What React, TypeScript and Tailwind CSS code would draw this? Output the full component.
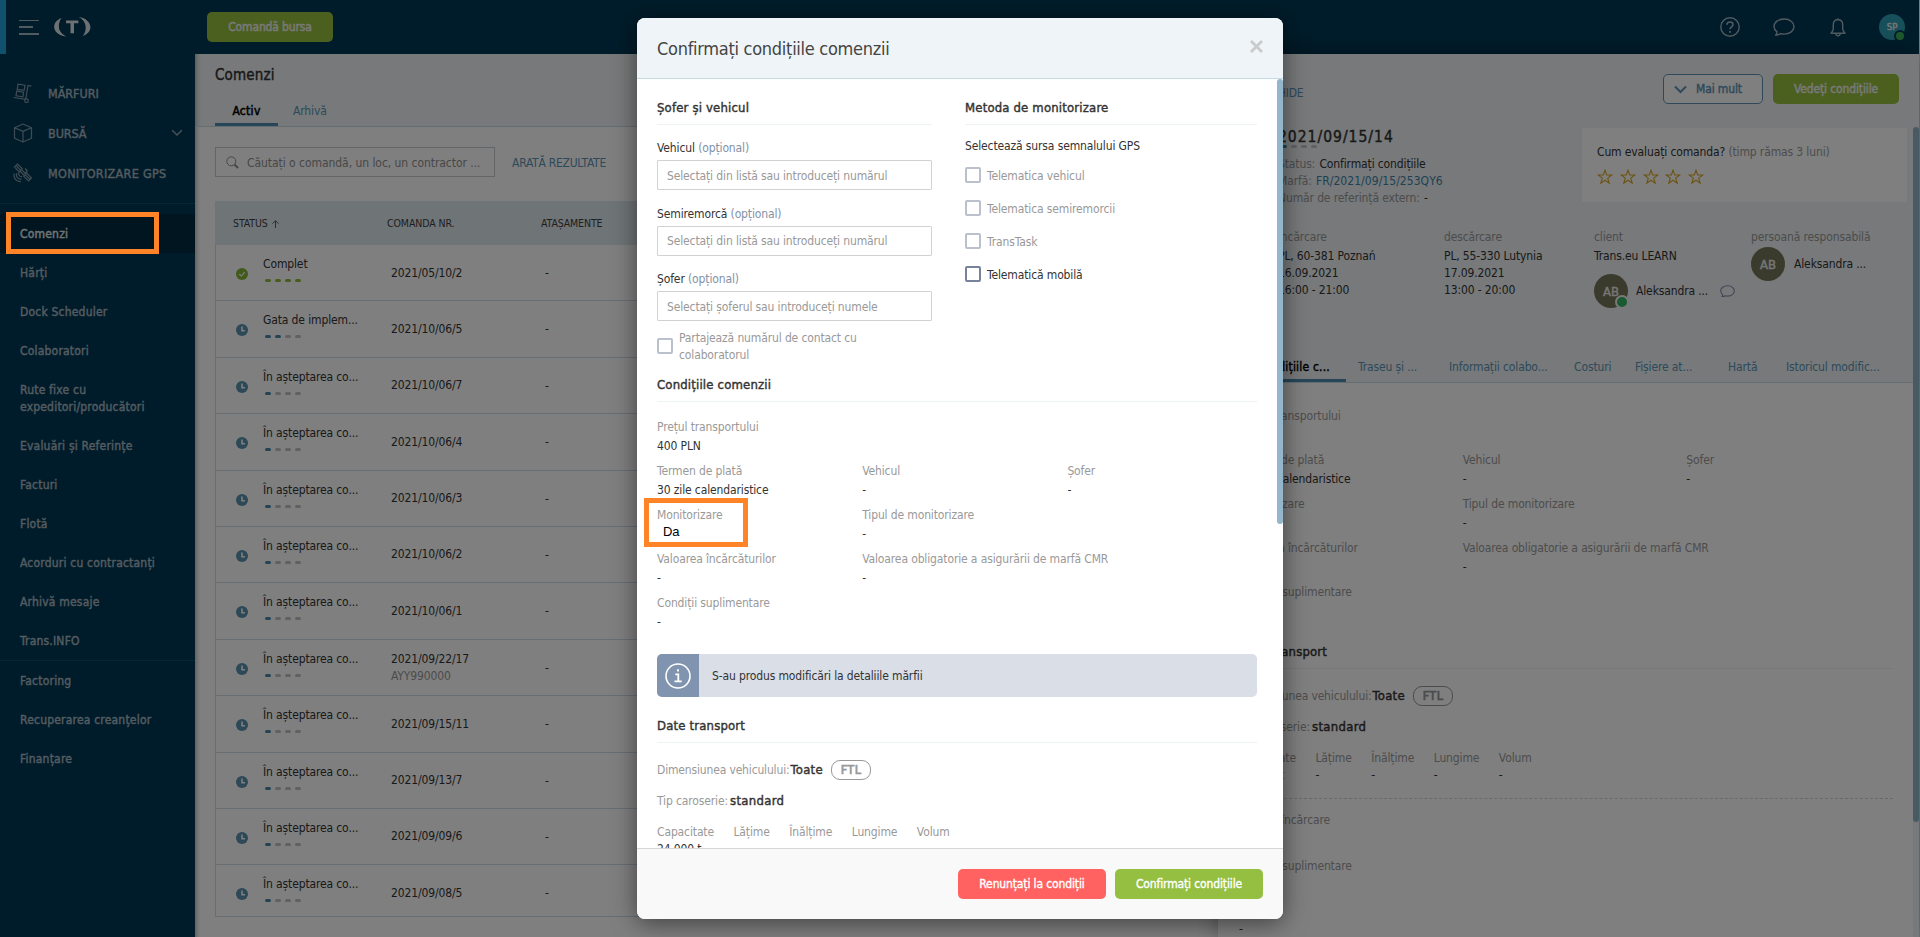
import type { ReactNode } from "react";

const orders = [
  { status: 'Complet', number: '2021/05/10/2', done: 4 },
  { status: 'Gata de implem...', number: '2021/10/06/5', done: 2 },
  { status: 'În așteptarea co...', number: '2021/10/06/7', done: 1 },
  { status: 'În așteptarea co...', number: '2021/10/06/4', done: 1 },
  { status: 'În așteptarea co...', number: '2021/10/06/3', done: 1 },
  { status: 'În așteptarea co...', number: '2021/10/06/2', done: 1 },
  { status: 'În așteptarea co...', number: '2021/10/06/1', done: 1 },
  { status: 'În așteptarea co...', number: '2021/09/22/17', extra: 'AYY990000', done: 1 },
  { status: 'În așteptarea co...', number: '2021/09/15/11', done: 1 },
  { status: 'În așteptarea co...', number: '2021/09/13/7', done: 1 },
  { status: 'În așteptarea co...', number: '2021/09/09/6', done: 1 },
  { status: 'În așteptarea co...', number: '2021/09/08/5', done: 1 },
];

const menuItems = [
  'Hărți',
  'Dock Scheduler',
  'Colaboratori',
  'Rute fixe cu expeditori/producători',
  'Evaluări și Referințe',
  'Facturi',
  'Flotă',
  'Acorduri cu contractanți',
  'Arhivă mesaje',
  'Trans.INFO',
];

const financeItems = ['Factoring', 'Recuperarea creanțelor', 'Finanțare'];

const detailTabs = [
  { label: 'Traseu și ...', width: 'w-[91px]' },
  { label: 'Informații colabo...', width: 'w-[125px]' },
  { label: 'Costuri', width: 'w-[61px]' },
  { label: 'Fișiere at...', width: 'w-[93px]' },
  { label: 'Hartă', width: 'w-[58px]' },
  { label: 'Istoricul modific...', width: 'w-[100px]' },
];

const semi = '[-webkit-text-stroke:0.4px_currentColor]';

function Progress({ done }: { done: number }) {
  return (
    <div className="flex gap-1">
      {[0, 1, 2, 3].map((step) => (
        <span
          key={step}
          className={`h-[3px] w-1.5 rounded-full ${done === 4 ? 'bg-[#8fbb3c]' : step < done ? 'bg-[#4889ab]' : 'bg-[#c3c3c3]'}`}
        />
      ))}
    </div>
  );
}

function StatusIcon({ complete }: { complete: boolean }) {
  return (
    <svg width="12" height="12" viewBox="0 0 12 12" fill="none" stroke="#fff">
      <circle cx="6" cy="6" r="6" fill={complete ? '#87b53a' : '#5b90ac'} stroke="none" />
      {complete ? <path d="M3.2 6.1 5.3 8l3.5-3.8" strokeWidth="1.1" /> : <path d="M6 2.6V6.7H9" strokeWidth="1.6" />}
    </svg>
  );
}

function Bubble({ width, height, color, stroke }: { width: number; height: number; color: string; stroke: number }) {
  return (
    <svg width={width} height={height} viewBox="0 0 22 18" fill="none" stroke={color} strokeWidth={stroke} strokeLinejoin="round">
      <path d="M11.2 1C5.4 1 1 4.3 1 8.5c0 2.2 1.2 4 3 5.4-.1 1.2-.5 2.3-1.3 3.3 2.1-.1 3.7-.7 4.8-1.6 1.1.3 2.4.5 3.7.5 5.7 0 9.8-3.3 9.8-7.5S16.9 1 11.2 1Z" />
    </svg>
  );
}

function Avatar({ online }: { online?: boolean }) {
  return (
    <div className={`relative flex h-[34px] w-[34px] shrink-0 items-center justify-center rounded-full bg-[#75755a] text-[13px] text-[#ededed] ${semi}`}>
      AB
      {online && <span className="absolute -right-px -bottom-px h-3.5 w-3.5 rounded-full border-2 border-[#eef3f5] bg-[#35b45e]" />}
    </div>
  );
}

function SectionTitle({ children }: { children: ReactNode }) {
  return <h3 className={`h-7 border-b border-[#edf3f5] text-[13px] leading-[21px] tracking-[0.17px] text-[#333] ${semi}`}>{children}</h3>;
}

function Field({ label, value = '-' }: { label: string; value?: string }) {
  return (
    <div className="h-[38px] pt-px leading-[19px] whitespace-nowrap">
      <div className="text-[#999]">{label}</div>
      <div className="text-[#333]">{value}</div>
    </div>
  );
}

// Order conditions are listed both in the side panel and in the dialog
function Conditions({ highlighted }: { highlighted?: boolean }) {
  return (
    <div className="grid grid-cols-[repeat(2,34.2%)_31.6%] gap-y-1.5">
      <div className="col-span-3"><Field label="Prețul transportului" value="400 PLN" /></div>
      <Field label="Termen de plată" value="30 zile calendaristice" />
      <Field label="Vehicul" />
      <Field label="Șofer" />
      <div className="relative">
        <Field label="Monitorizare" value={highlighted ? '' : 'Da'} />
        {highlighted && (
          <div className="absolute -top-[7px] -left-[13px] h-[49px] w-[104px] border-5 border-[#ff8427]">
            <span className="absolute top-[19px] left-[14px] font-['Liberation_Sans',sans-serif] text-[13px] text-black">Da</span>
          </div>
        )}
      </div>
      <div className="col-span-2"><Field label="Tipul de monitorizare" /></div>
      <Field label="Valoarea încărcăturilor" />
      <div className="col-span-2"><Field label="Valoarea obligatorie a asigurării de marfă CMR" /></div>
      <div className="col-span-3"><Field label="Condiții suplimentare" /></div>
    </div>
  );
}

function TransportData({ values }: { values: string[] }) {
  return (
    <>
      <SectionTitle>Date transport</SectionTitle>
      <div className="mt-[17px] flex h-5 items-center tracking-[-0.16px] text-[#999]">
        Dimensiunea vehiculului:
        <span className={`ml-px text-[13px] tracking-[0.3px] text-[#333] ${semi}`}>Toate</span>
        <span className={`ml-2 flex h-5 w-10 items-center justify-center rounded-[9px] border border-[#999] text-[12.5px] tracking-[0.4px] [-webkit-text-stroke:0.7px_#999]`}>FTL</span>
      </div>
      <div className="mt-[11px] flex h-5 items-center text-[#999]">
        Tip caroserie:
        <span className={`ml-0.5 text-[13px] tracking-[0.3px] text-[#333] ${semi}`}>standard</span>
      </div>
      <div className="mt-[11px] flex gap-[19.5px] pt-px whitespace-nowrap text-[#999]">
        {['Capacitate', 'Lățime', 'Înălțime', 'Lungime', 'Volum'].map((label, index) => (
          <div key={label}>
            <div className="leading-[19px]">{label}</div>
            <div className="h-4 leading-[15px] text-[#333]">{values[index]}</div>
          </div>
        ))}
      </div>
    </>
  );
}

function Header() {
  return (
    <header className="flex h-[54px] shrink-0 items-center bg-[#003955]">
      <div className="h-full w-1.5 bg-[#20a4dc]" />
      <div className="ml-[13px] flex h-[15px] flex-col justify-between">
        <span className="h-[1.5px] w-5 bg-[#a3b4bf]" />
        <span className="h-[1.5px] w-3.5 bg-[#a3b4bf]" />
        <span className="h-[1.5px] w-5 bg-[#a3b4bf]" />
      </div>
      <svg className="ml-[15px]" width="38" height="22" viewBox="0 0 38 22" fill="#dde3e6">
        <path d="M7.5 2C2.5 4 .1 7.3.2 11c.2 4.5 4 8.3 12 9.5C7.7 18.2 5 14.8 4.9 11 4.7 7.4 5.6 4.7 7.5 2Z" />
        <path d="M28.8 20C33.8 18 36.5 15 36.4 11 36.2 6.5 32 1.9 24.5 1c4.5 2 7 6 7.2 10 .2 3.5-1 6.5-2.9 9Z" />
        <path d="M12 4.600h12.400V7.200H20V17.300h-3.500V7.200H12Z" />
      </svg>
      <button className={`ml-[115px] h-[30px] w-[126px] rounded-[5px] bg-[#96c03f] text-[12px] text-[#f2f2f2] ${semi}`}>Comandă bursa</button>
      <div className="mr-3.5 ml-auto flex items-center">
        <svg width="20" height="20" viewBox="0 0 20 20" fill="none" stroke="#a3b4bf" strokeWidth="1.4">
          <circle cx="10" cy="10" r="9.2" />
          <path d="M7 7.8C7 5.9 8.3 5 10 5s3 1 3 2.6c0 2.1-3 2.3-3 4.6" strokeWidth="1.6" />
          <path d="M10 14v1.8" strokeWidth="1.8" />
        </svg>
        <div className="ml-[33px]"><Bubble width={22} height={18} color="#a3b4bf" stroke={1.4} /></div>
        <svg className="ml-[35px]" width="16" height="19" viewBox="0 0 16 19" fill="none" stroke="#a3b4bf" strokeWidth="1.4" strokeLinejoin="round">
          <path d="M8 1.7c-3 0-4.7 2.1-4.7 5v4.2c0 1.6-.9 2.6-2.3 4.3h14c-1.4-1.700-2.300-2.700-2.300-4.300V6.700c0-2.900-1.700-5-4.700-5Z" />
          <path d="M8 .2v1.5M5.800 15.500c.2 3 4.200 3 4.400 0" />
        </svg>
        <div className={`relative ml-[33px] flex h-[26px] w-[26px] items-center justify-center rounded-full bg-[#2f9fb4] text-[9.5px] text-[#eee] ${semi}`}>
          SP
          <span className="absolute -right-px -bottom-0.5 h-3 w-3 rounded-full border-2 border-[#003955] bg-[#3cb45c]" />
        </div>
      </div>
    </header>
  );
}

function Sidebar() {
  return (
    <nav className="w-[195px] shrink-0 bg-[#003955] text-[#aab7c0]">
      <div className={`pt-[19px] text-[12.5px] leading-[17px] tracking-[-0.05px] ${semi}`}>
        <div className="flex h-10 items-center pl-[13px]">
          <svg className="w-5" height="20" viewBox="0 0 20 20" fill="none" stroke="#7f98a6" strokeWidth="1.2">
            <path d="M5 1.2l7 1-.9 5.2-6.9-1ZM3.7 8.2l6.9 1-.7 4.6-6.9-1ZM.5 14.5l12.2 1.8L15 2.5l3.5.7" />
            <circle cx="13.5" cy="17.7" r="1.8" />
          </svg>
          <span className="ml-[15px] pt-px">MĂRFURI</span>
        </div>
        <div className="flex h-10 items-center pr-3 pl-[13px]">
          <svg width="20" height="20" viewBox="0 0 20 20" fill="none" stroke="#7f98a6" strokeWidth="1.2" strokeLinejoin="round">
            <path d="M10 1l8.500 3.700v10.500L10 19l-8.500-3.800V4.700ZM1.500 4.700 10 8.400l8.500-3.700M10 8.400V19" />
          </svg>
          <span className="ml-[15px] pt-px">BURSĂ</span>
          <svg className="ml-auto" width="12" height="8" viewBox="0 0 12 8" fill="none" stroke="#8ea3b0" strokeWidth="1.5"><path d="M1.2 1.2 6 6l4.8-4.8" /></svg>
        </div>
        <div className="flex h-10 items-center pl-[13px]">
          <svg width="20" height="20" viewBox="0 0 20 20" fill="none" stroke="#7f98a6" strokeWidth="1.2">
            <path d="M4.500 1 1.500 4l4.800 4.800 3-3ZM13.700 10.200l-3 3 4.800 4.800 3-3ZM3 2.500l4.800 4.800M12.200 11.700l4.800 4.800M8.500 6.600l4.400 4.400M7 8.200l4.300 4.300M12 5.500l2.300 2.300-2.500 2.500M6.300 9.400c-1.500 1.700-.4 4.300 2.800 4.300M3.800 10.200c-1.400 3.200 1 6.300 4.700 5.900M1.200 10.500C.2 15.200 3.200 19 8 18.600" />
          </svg>
          <span className="ml-[15px] pt-px tracking-[0.3px]">MONITORIZARE GPS</span>
        </div>
      </div>
      <div className={`mt-[10px] border-t border-[#0a4d6e] pt-[10px] leading-[17px] tracking-[0.2px] ${semi}`}>
        <div className="bg-[#002a40] px-5 pt-3 pb-2.5 text-[#e4e7e9]">Comenzi</div>
        {menuItems.map((item) => (
          <div key={item} className="px-5 pt-3 pb-2.5">{item}</div>
        ))}
      </div>
      <div className={`border-t border-[#0a4d6e] leading-[17px] tracking-[0.2px] ${semi}`}>
        {financeItems.map((item) => (
          <div key={item} className="px-5 pt-3 pb-2.5">{item}</div>
        ))}
      </div>
    </nav>
  );
}

function OrderList() {
  return (
    <main className="w-[1023px] shrink-0 bg-white shadow-[inset_6px_0_5px_-5px_rgba(0,0,0,0.35)]">
      <div className="h-[73px] border-b border-[#c9dce5] bg-[#eef3f5] pl-5 shadow-[inset_6px_0_5px_-5px_rgba(0,0,0,0.35)]">
        <h1 className={`pt-[10px] text-[15px] leading-[22px] tracking-[0.15px] text-[#333] ${semi}`}>Comenzi</h1>
        <div className="mt-2 flex h-8 pt-px leading-[32px]">
          <div className="h-[31px] w-[63px] border-b-3 border-[#4f8db0] text-center tracking-[0.3px] text-black [-webkit-text-stroke:0.5px_black]">Activ</div>
          <div className="ml-[15px] text-[#5b93b6]">Arhivă</div>
        </div>
      </div>
      <div className="mt-5 ml-5 flex items-center">
        <div className="flex h-[30px] w-[280px] items-center border border-[#c6cdd2] pl-[10px] whitespace-nowrap text-[#8f8f8f]">
          <svg width="13" height="13" viewBox="0 0 13 13" fill="none" stroke="#8f8f8f"><circle cx="5.3" cy="5.3" r="4.5" /><path d="m8.5 8.5 3.5 3.5" strokeWidth="2" /></svg>
          <span className="ml-2 pt-px tracking-[-0.05px]">Căutați o comandă, un loc, un contractor ...</span>
        </div>
        <span className="ml-[17px] pt-0.5 tracking-[-0.25px] text-[#5b93b6]">ARATĂ REZULTATE</span>
      </div>
      <div className="mt-6 ml-5 w-[880px] border-l border-[#cfdae1]">
        <div className="-ml-px flex h-11 items-center bg-[#dfe8ee] pt-0.5 pl-[18px] text-[10.5px] tracking-[-0.1px] text-[#3f3f3f]">
          <div className="flex w-[154px] items-center gap-1">
            STATUS
            <svg width="7" height="8" viewBox="0 0 7 8" fill="none" stroke="#4a4a4a" strokeWidth="0.9"><path d="M3.500 8V1M.5 3.700l3-3 3 3" /></svg>
          </div>
          <div className="w-[154px]">COMANDA NR.</div>
          <div>ATAȘAMENTE</div>
        </div>
        {orders.map((order) => (
          <div key={order.number} className="flex h-[56.4px] border-b border-[#cfdde6] text-[#333] last:h-[52px]">
            <div className="w-[47px] pt-[23px] pl-[20px]"><StatusIcon complete={order.done === 4} /></div>
            <div className="w-[128px]">
              <div className="mt-[10px] mb-[6px] leading-[18px]">{order.status}</div>
              <div className="ml-0.5"><Progress done={order.done} /></div>
            </div>
            <div className="flex h-[56px] w-[154px] flex-col justify-center leading-[17px]">
              {order.number}
              {order.extra && <span className="text-[#999]">{order.extra}</span>}
            </div>
            <div className="flex h-[56px] items-center">-</div>
          </div>
        ))}
      </div>
    </main>
  );
}

function OrderPanel() {
  return (
    <aside className="relative w-[701px] shrink-0 bg-white shadow-[0_0_20px_rgba(0,0,0,0.35)]">
      <div className="flex h-[329px] flex-col border-b border-[#c9dce5] bg-[#eef3f5]">
        <div className="mt-5 mr-5 ml-[60px] flex h-[30px]">
          <span className="mt-[11px] leading-[17px] tracking-[-0.25px] text-[#5b93b6]">HIDE</span>
          <button className={`ml-auto flex h-[30px] w-[100px] items-center rounded-[5px] border border-[#5b93b6] bg-white pl-[10px] text-[#5b93b6] ${semi}`}>
            <svg width="13" height="9" viewBox="0 0 13 9" fill="none" stroke="#5b93b6" strokeWidth="2"><path d="M1 1.500 6.500 7 12 1.500" /></svg>
            <span className="ml-[9px]">Mai mult</span>
          </button>
          <button className={`ml-[10px] h-[30px] w-[126px] rounded-[5px] bg-[#96c03f] text-[#f2f2f2] ${semi}`}>Vedeți condițiile</button>
        </div>
        <div className="mt-6 mr-3 ml-[60px] flex h-[74px] justify-between">
          <div className="leading-[17px] text-[#999]">
            <div className={`h-[17px] text-[15.5px] leading-[18px] tracking-[1px] text-[#333] ${semi}`}>2021/09/15/14</div>
            <div className="mb-2 ml-[3px]"><Progress done={1} /></div>
            <div>Status: <span className="ml-px text-[#333]">Confirmați condițiile</span></div>
            <div>Marfă: <span className="ml-px tracking-[0.05px] text-[#3e83a8]">FR/2021/09/15/253QY6</span></div>
            <div>Număr de referință extern: <span className="ml-px text-[#333]">-</span></div>
          </div>
          <div className="h-[74px] w-[325px] bg-white pt-4 pl-[15px] leading-[17px] text-[#333]">
            Cum evaluați comanda? <span className="text-[#999]">(timp rămas 3 luni)</span>
            <div className="mt-2 flex gap-[6.8px]">
              {[1, 2, 3, 4, 5].map((star) => (
                <svg key={star} width="16" height="16" viewBox="0 0 16 16" fill="none" stroke="#d9a520" strokeWidth="1.1">
                  <path d="M8 1.200 9.700 6h5.100l-4.100 3.100 1.500 5.100L8 11.200l-4.200 3 1.500-5.100L1.200 6h5.100Z" />
                </svg>
              ))}
            </div>
          </div>
        </div>
        <div className="mt-[27px] ml-[60px] flex leading-[17px] whitespace-nowrap text-[#333]">
          <div className="w-[166px]">
            <div className="mb-0.5 text-[#999]">încărcare</div>
            <div>PL, 60-381 Poznań</div>
            <div>16.09.2021</div>
            <div>16:00 - 21:00</div>
          </div>
          <div className="w-[150px]">
            <div className="mb-0.5 text-[#999]">descărcare</div>
            <div>PL, 55-330 Lutynia</div>
            <div>17.09.2021</div>
            <div>13:00 - 20:00</div>
          </div>
          <div className="w-[157px]">
            <div className="mb-0.5 text-[#999]">client</div>
            <div>Trans.eu LEARN</div>
            <div className="mt-[9px] flex items-center">
              <Avatar online />
              <span className="ml-2 w-[84px]">Aleksandra ...</span>
              <Bubble width={15} height={12.5} color="#7d8fab" stroke={1.6} />
            </div>
          </div>
          <div>
            <div className="mb-px text-[#999]">persoană responsabilă</div>
            <div className="flex items-center">
              <Avatar />
              <span className="ml-[9px]">Aleksandra ...</span>
            </div>
          </div>
        </div>
        <div className="mt-auto ml-5 flex h-[30px] leading-[31px] whitespace-nowrap text-[#5b93b6]">
          <div className="mr-3 w-[108px] border-b-3 border-[#4f8db0] pr-4 text-right tracking-[0.2px] text-black [-webkit-text-stroke:0.4px_black]">Condițiile c...</div>
          {detailTabs.map((tab) => (
            <div key={tab.label} className={tab.width}>{tab.label}</div>
          ))}
        </div>
      </div>
      <div className="mr-[26px] ml-[21px] pt-[23px]">
        <Conditions />
        <div className="mt-[21px]"><TransportData values={['24.000 t', '-', '-', '-', '-']} /></div>
        <div className="mt-[14px] border-t border-dashed border-[#d4d4d4] pt-[11px]">
          <Field label="Mod de încărcare" />
          <div className="mt-2"><Field label="Condiții suplimentare" /></div>
        </div>
        <div className="mt-[26px] leading-[19px] text-[#333]">-</div>
      </div>
      <div className="absolute top-[73px] right-0 bottom-0 w-1.5 bg-[#eef3f5]">
        <div className="h-[695px] rounded-full bg-[#91b6cb]" />
      </div>
    </aside>
  );
}

function Checkbox({ label, enabled }: { label: string; enabled?: boolean }) {
  return (
    <div className="flex items-center gap-1.5">
      <span className={`h-4 w-4 shrink-0 rounded-[2px] border-2 ${enabled ? 'border-[#76839a]' : 'border-[#bac1cc]'}`} />
      <span className={`-my-1 pt-0.5 leading-[17px] ${enabled ? 'text-[#333]' : 'text-[#999]'}`}>{label}</span>
    </div>
  );
}

function SelectField({ label, placeholder }: { label: string; placeholder: string }) {
  return (
    <label className="block">
      <span className="mb-[3px] block pt-px leading-[17px] text-[#333]">{label} <span className="text-[#8292a6]">(opțional)</span></span>
      <input
        type="text"
        placeholder={placeholder}
        className="block h-[30px] w-full rounded-[1px] border border-[#d2d2d2] px-[9px] pt-px tracking-[inherit] placeholder:text-[#999]"
      />
    </label>
  );
}

function ConfirmDialog() {
  return (
    <div className="flex h-[901px] w-[646px] flex-col overflow-hidden rounded-lg bg-white shadow-[0_4px_24px_rgba(0,0,0,0.5)]">
      <div className="flex h-[61px] shrink-0 items-center justify-between border-b border-[#c3dbe3] bg-[#eef4f7] px-5">
        <h2 className="text-[18px] tracking-[-0.28px] text-[#444]">Confirmați condițiile comenzii</h2>
        <svg className="-mt-[3px]" width="13" height="13" viewBox="0 0 13 13" stroke="#c8cacb" strokeWidth="2.8"><path d="m1 1 11 11M12 1 1 12" /></svg>
      </div>
      <div className="relative h-[769px] overflow-hidden pt-[18px] pr-[26px] pl-5">
        <div className="flex justify-between">
          <div className="w-[275px]">
            <SectionTitle>Șofer și vehicul</SectionTitle>
            <div className="mt-[14px] flex flex-col gap-[14.5px]">
              <SelectField label="Vehicul" placeholder="Selectați din listă sau introduceți numărul" />
              <SelectField label="Semiremorcă" placeholder="Selectați din listă sau introduceți numărul" />
              <SelectField label="Șofer" placeholder="Selectați șoferul sau introduceți numele" />
            </div>
            <div className="mt-[11px] mb-[3px] w-[210px]"><Checkbox label="Partajează numărul de contact cu colaboratorul" /></div>
          </div>
          <div className="w-[292px]">
            <SectionTitle>Metoda de monitorizare</SectionTitle>
            <div className="mt-[13px] leading-[17px] text-[#333]">Selectează sursa semnalului GPS</div>
            <div className="mt-3 flex flex-col gap-[17px]">
              <Checkbox label="Telematica vehicul" />
              <Checkbox label="Telematica semiremorcii" />
              <Checkbox label="TransTask" />
              <Checkbox label="Telematică mobilă" enabled />
            </div>
          </div>
        </div>
        <div className="mt-[11px]"><SectionTitle>Condițiile comenzii</SectionTitle></div>
        <div className="mt-[15px]"><Conditions highlighted /></div>
        <div className="mt-[23px] mb-[18px] flex h-[43px] items-center overflow-hidden rounded-[5px] bg-[#d9dee7] text-[#333]">
          <div className="flex h-full w-[42px] items-center justify-center bg-[#8094b0]">
            <svg width="26" height="26" viewBox="0 0 26 26" fill="none" stroke="#fff" strokeWidth="1.6">
              <circle cx="13" cy="13" r="12" />
              <path d="M10.3 11.3h3v7M9.5 18.3h7.2M13 6.2v2.2" strokeWidth="1.8" />
            </svg>
          </div>
          <span className="ml-[13px]">S-au produs modificări la detaliile mărfii</span>
        </div>
        <TransportData values={['24.000 t']} />
        <div className="absolute top-0 right-0 h-[445px] w-1.5 rounded-full bg-[#93b6cb]" />
      </div>
      <div className="flex flex-1 justify-end gap-[9px] border-t border-[#d6d6d6] bg-[#f9f9f9] pt-5 pr-5">
        <button className="h-[30px] w-[148px] rounded-[5px] bg-[#ff6260] text-white [-webkit-text-stroke:0.35px_white]">Renunțați la condiții</button>
        <button className="h-[30px] w-[148px] rounded-[5px] bg-[#94bf40] text-white [-webkit-text-stroke:0.35px_white]">Confirmați condițiile</button>
      </div>
    </div>
  );
}

export default function App() {
  return (
    <div className="relative flex h-[937px] w-[1920px] flex-col overflow-hidden bg-[#eef3f5] font-['DejaVu_Sans_Condensed','DejaVu_Sans',sans-serif] text-[12px] tracking-[-0.13px]">
      <div className="w-[1919px]"><Header /></div>
      <div className="flex min-h-0 flex-1">
        <Sidebar />
        <OrderList />
        <OrderPanel />
      </div>
      <div className="absolute inset-0 flex items-center justify-center bg-black/50">
        <ConfirmDialog />
      </div>
      <div className="absolute top-[212px] left-[6px] h-[42px] w-[153px] border-5 border-[#ff8427]" />
    </div>
  );
}
